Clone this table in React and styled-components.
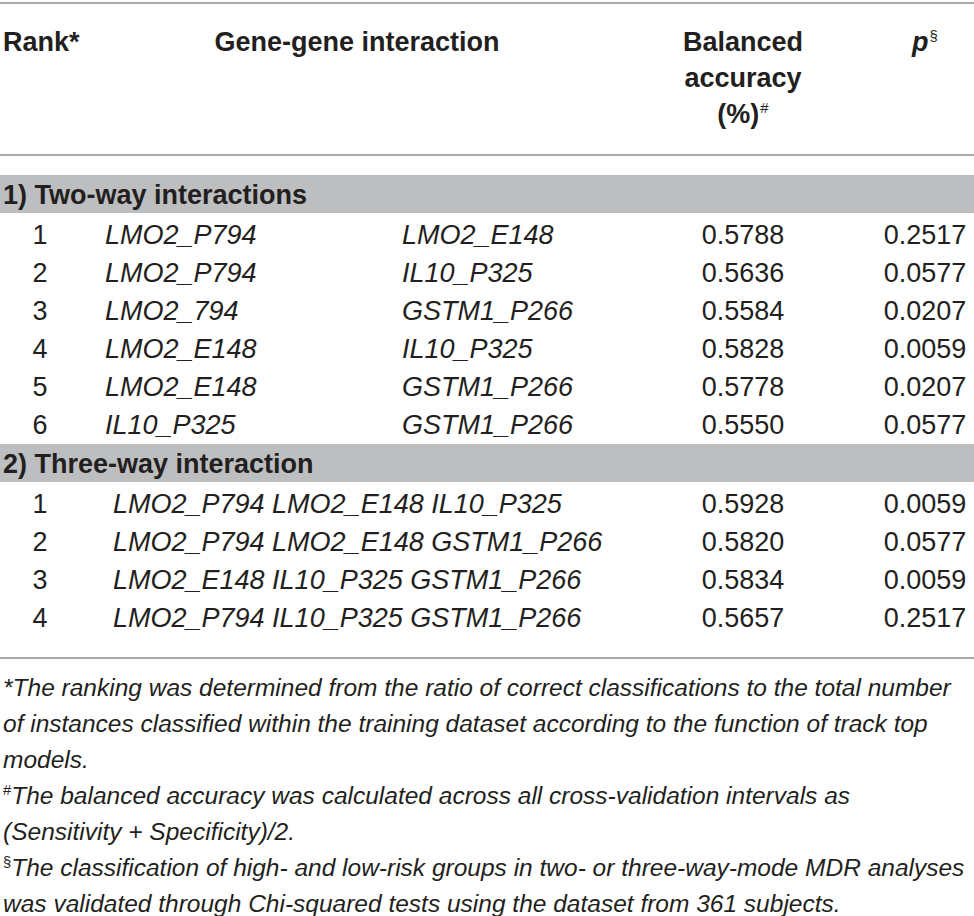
import React from "react";
import styled, { createGlobalStyle, css } from "styled-components";

const GlobalStyle = createGlobalStyle`
  body {
    margin: 0;
    background: #ffffff;
    color: #231f20;
    font-family: "Liberation Sans", Arial, sans-serif;
  }
`;

const columns = css`
  display: grid;
  grid-template-columns: 80px 322px 208px 266px 98px;
`;

const Page = styled.div`
  width: 974px;
  padding-top: 2px;
`;

const Head = styled.div`
  ${columns};
  border-top: 2px solid #a7a9ac;
  border-bottom: 2px solid #a7a9ac;
  padding: 20px 0 22px;
  font-size: 27px;
  font-weight: bold;
  line-height: 36px;
`;

const HeadCell = styled.div`
  grid-column: span ${(p) => p.$span || 1};
  text-align: ${(p) => p.$align || "left"};
  padding-left: ${(p) => p.$indent || 0}px;
`;

const Sup = styled.sup`
  font-size: 0.55em;
  font-weight: normal;
  vertical-align: 0.7em;
  line-height: 0;
  margin-left: 1px;
`;

const Pee = styled.i`
  font-style: italic;
`;

const Body = styled.div`
  padding: 19px 0 20px;
  border-bottom: 2px solid #a7a9ac;
`;

const Band = styled.div`
  background: #bcbec0;
  height: 38px;
  line-height: 40px;
  margin-bottom: 3px;
  padding-left: 3px;
  font-size: 27px;
  font-weight: bold;
`;

const Row = styled.div`
  ${columns};
  height: 38px;
  align-items: center;
  font-size: 27px;
`;

const Rank = styled.div`
  text-align: center;
`;

const Gene = styled.div`
  grid-column: span ${(p) => p.$span || 1};
  padding-left: ${(p) => p.$indent || 0}px;
  font-style: italic;
  white-space: nowrap;
`;

const Num = styled.div`
  text-align: center;
`;

const Notes = styled.div`
  padding: 11px 0 0 3px;
  font-size: 24.5px;
  line-height: 36px;
  font-style: italic;
  white-space: nowrap;
`;

const Note = styled.p`
  margin: 0;
`;

const Mark = styled.span`
  font-size: 0.6em;
  vertical-align: 0.6em;
  line-height: 0;
  font-style: normal;
`;

const twoWay = [
  ["1", "LMO2_P794", "LMO2_E148", "0.5788", "0.2517"],
  ["2", "LMO2_P794", "IL10_P325", "0.5636", "0.0577"],
  ["3", "LMO2_794", "GSTM1_P266", "0.5584", "0.0207"],
  ["4", "LMO2_E148", "IL10_P325", "0.5828", "0.0059"],
  ["5", "LMO2_E148", "GSTM1_P266", "0.5778", "0.0207"],
  ["6", "IL10_P325", "GSTM1_P266", "0.5550", "0.0577"],
];

const threeWay = [
  ["1", "LMO2_P794 LMO2_E148 IL10_P325", "0.5928", "0.0059"],
  ["2", "LMO2_P794 LMO2_E148 GSTM1_P266", "0.5820", "0.0577"],
  ["3", "LMO2_E148 IL10_P325 GSTM1_P266", "0.5834", "0.0059"],
  ["4", "LMO2_P794 IL10_P325 GSTM1_P266", "0.5657", "0.2517"],
];

export default function App() {
  return (
    <Page>
      <GlobalStyle />
      <Head>
        <HeadCell $indent={3}>Rank*</HeadCell>
        <HeadCell $span={2} $align="center" $indent={24}>
          Gene-gene interaction
        </HeadCell>
        <HeadCell $align="center">
          Balanced
          <br />
          accuracy
          <br />
          (%)<Sup>#</Sup>
        </HeadCell>
        <HeadCell $align="center">
          <Pee>p</Pee>
          <Sup>§</Sup>
        </HeadCell>
      </Head>
      <Body>
        <Band>1) Two-way interactions</Band>
        {twoWay.map(([rank, a, b, acc, p]) => (
          <Row key={"two" + rank}>
            <Rank>{rank}</Rank>
            <Gene $indent={25}>{a}</Gene>
            <Gene>{b}</Gene>
            <Num>{acc}</Num>
            <Num>{p}</Num>
          </Row>
        ))}
        <Band>2) Three-way interaction</Band>
        {threeWay.map(([rank, genes, acc, p]) => (
          <Row key={"three" + rank}>
            <Rank>{rank}</Rank>
            <Gene $span={2} $indent={33}>{genes}</Gene>
            <Num>{acc}</Num>
            <Num>{p}</Num>
          </Row>
        ))}
      </Body>
      <Notes>
        <Note>
          *The ranking was determined from the ratio of correct classifications to the total number
          <br />
          of instances classified within the training dataset according to the function of track top
          <br />
          models.
        </Note>
        <Note>
          <Mark>#</Mark>The balanced accuracy was calculated across all cross-validation intervals as
          <br />
          (Sensitivity + Specificity)/2.
        </Note>
        <Note>
          <Mark>§</Mark>The classification of high- and low-risk groups in two- or three-way-mode MDR analyses
          <br />
          was validated through Chi-squared tests using the dataset from 361 subjects.
        </Note>
      </Notes>
    </Page>
  );
}
